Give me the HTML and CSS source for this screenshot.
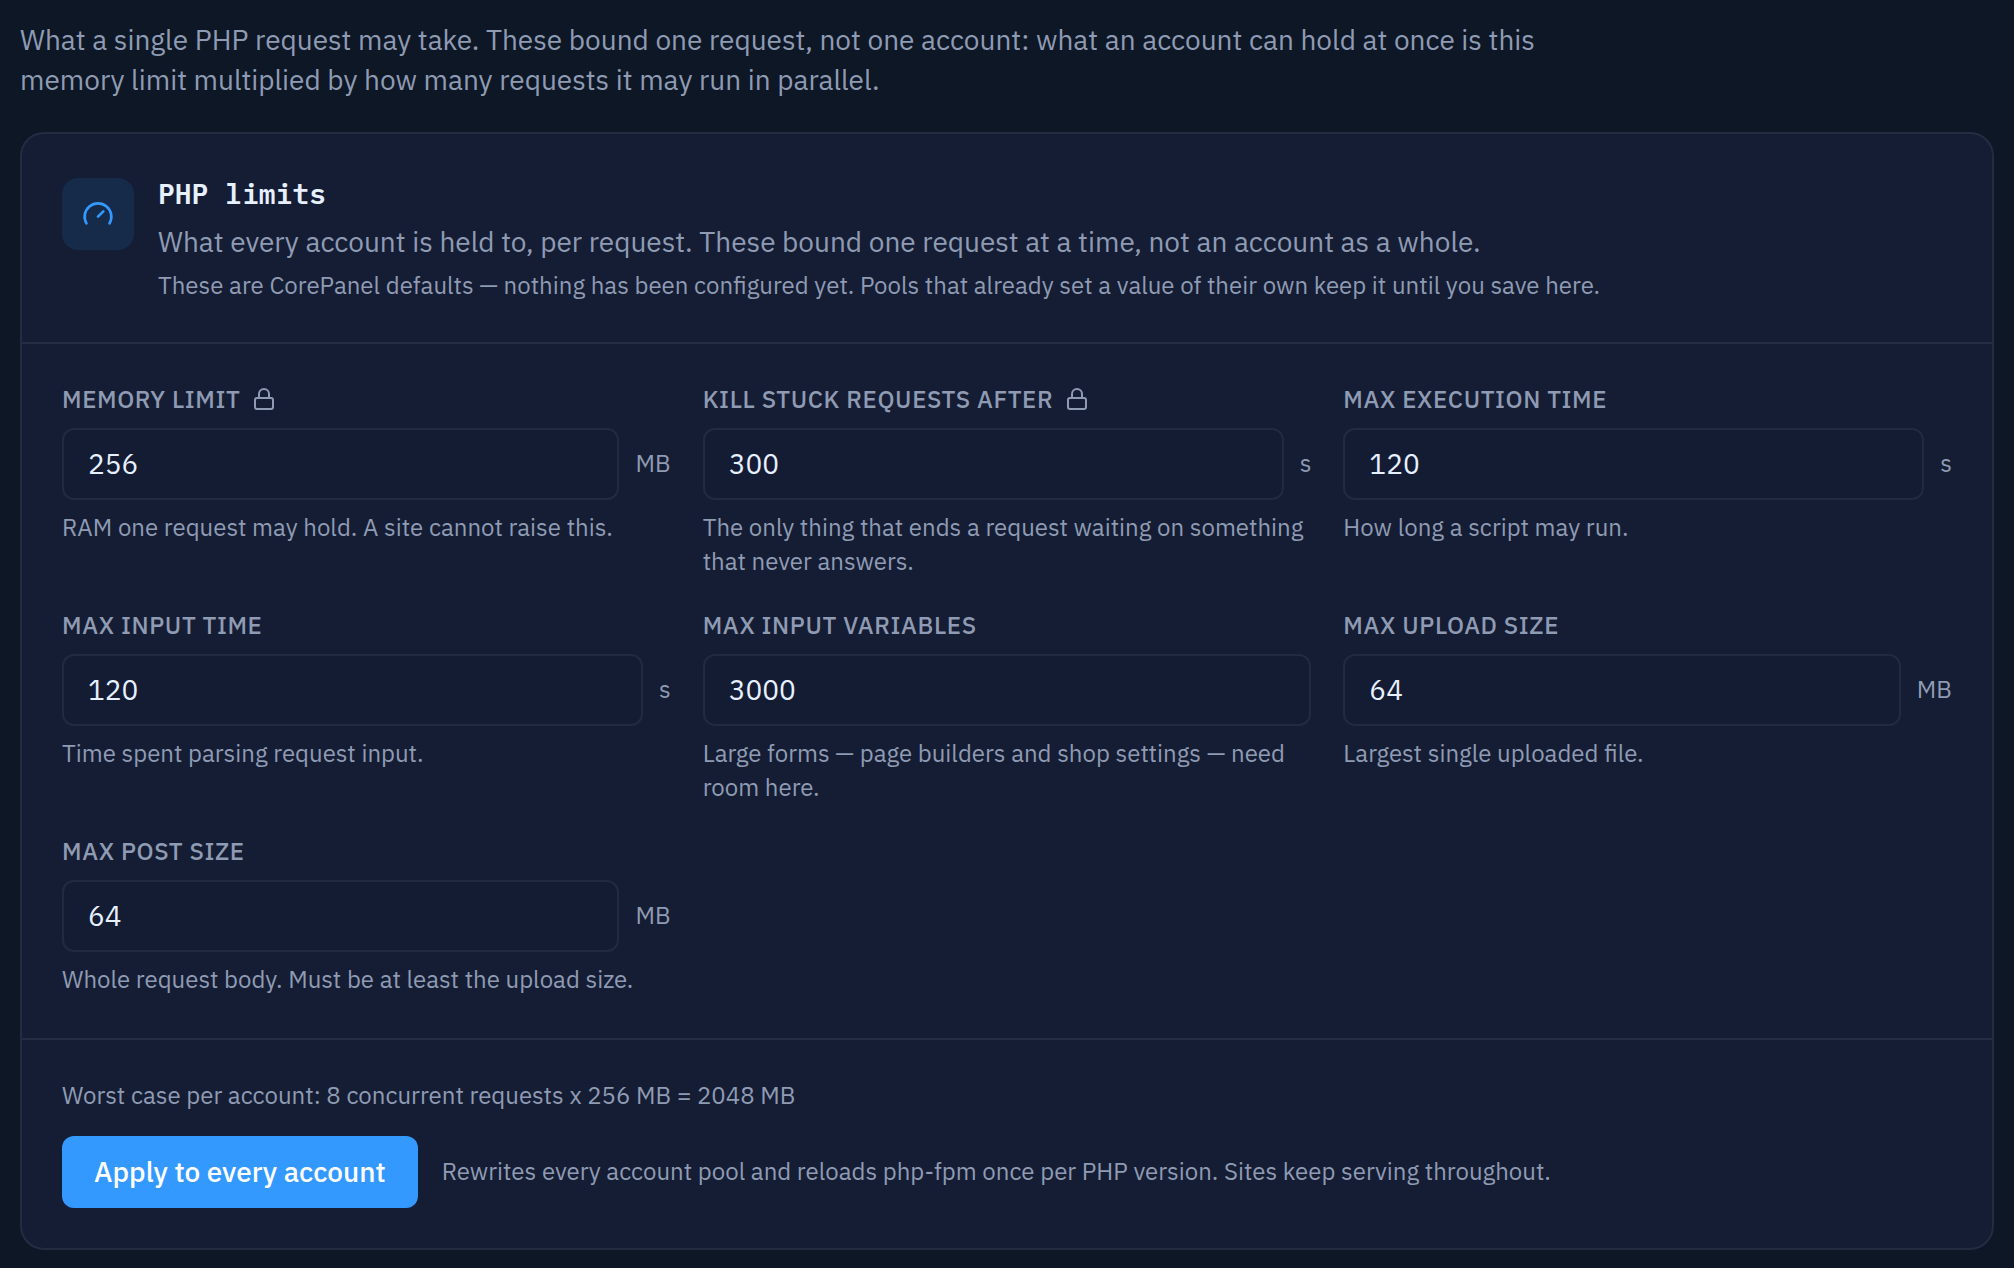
FILE: index.html
```html
<!DOCTYPE html>
<html lang="en">
<head>
  <meta charset="UTF-8">
  <meta name="viewport" content="width=device-width, initial-scale=1.0">
  <title>PHP limits</title>
  <link rel="stylesheet" href="styles.css">
</head>
<body>
  <p class="intro">What a single PHP request may take. These bound one request, not one account: what an account can hold at once is this memory limit multiplied by how many requests it may run in parallel.</p>

  <form class="card">
    <header class="card-header">
      <div class="card-icon">
        <svg viewBox="0 0 24 24" aria-hidden="true">
          <path d="m12 14 4-4"/>
          <path d="M3.34 19a10 10 0 1 1 17.32 0"/>
        </svg>
      </div>
      <div class="card-heading">
        <h1>PHP limits</h1>
        <p class="description">What every account is held to, per request. These bound one request at a time, not an account as a whole.</p>
        <p class="note">These are CorePanel defaults — nothing has been configured yet. Pools that already set a value of their own keep it until you save here.</p>
      </div>
    </header>

    <div class="fields">
      <div class="field">
        <label for="memory">Memory limit
          <svg class="lock" viewBox="0 0 24 24" aria-hidden="true">
            <rect x="3" y="11" width="18" height="11" rx="2"/>
            <path d="M7 11V7a5 5 0 0 1 10 0v4"/>
          </svg>
        </label>
        <div class="control">
          <input type="text" inputmode="numeric" id="memory" value="256">
          <span class="unit">MB</span>
        </div>
        <p class="hint">RAM one request may hold. A site cannot raise this.</p>
      </div>

      <div class="field">
        <label for="kill">Kill stuck requests after
          <svg class="lock" viewBox="0 0 24 24" aria-hidden="true">
            <rect x="3" y="11" width="18" height="11" rx="2"/>
            <path d="M7 11V7a5 5 0 0 1 10 0v4"/>
          </svg>
        </label>
        <div class="control">
          <input type="text" inputmode="numeric" id="kill" value="300">
          <span class="unit">s</span>
        </div>
        <p class="hint">The only thing that ends a request waiting on something that never answers.</p>
      </div>

      <div class="field">
        <label for="execution">Max execution time</label>
        <div class="control">
          <input type="text" inputmode="numeric" id="execution" value="120">
          <span class="unit">s</span>
        </div>
        <p class="hint">How long a script may run.</p>
      </div>

      <div class="field">
        <label for="inputTime">Max input time</label>
        <div class="control">
          <input type="text" inputmode="numeric" id="inputTime" value="120">
          <span class="unit">s</span>
        </div>
        <p class="hint">Time spent parsing request input.</p>
      </div>

      <div class="field">
        <label for="inputVars">Max input variables</label>
        <div class="control">
          <input type="text" inputmode="numeric" id="inputVars" value="3000">
        </div>
        <p class="hint">Large forms — page builders and shop settings — need room here.</p>
      </div>

      <div class="field">
        <label for="upload">Max upload size</label>
        <div class="control">
          <input type="text" inputmode="numeric" id="upload" value="64">
          <span class="unit">MB</span>
        </div>
        <p class="hint">Largest single uploaded file.</p>
      </div>

      <div class="field">
        <label for="post">Max post size</label>
        <div class="control">
          <input type="text" inputmode="numeric" id="post" value="64">
          <span class="unit">MB</span>
        </div>
        <p class="hint">Whole request body. Must be at least the upload size.</p>
      </div>
    </div>

    <footer class="card-footer">
      <p class="note">Worst case per account: 8 concurrent requests x 256 MB = 2048 MB</p>
      <div class="actions">
        <button type="button" class="apply-btn">Apply to every account</button>
        <p class="note">Rewrites every account pool and reloads php-fpm once per PHP version. Sites keep serving throughout.</p>
      </div>
    </footer>
  </form>
</body>
</html>
```
FILE: styles.css
```css
* {
  margin: 0;
  padding: 0;
  box-sizing: border-box;
}

body {
  padding: 20px 20px 18px;
  background: #0d1726;
  color: #8f9bb3;
  font-family: "IBM Plex Sans", Roboto, sans-serif;
  font-size: 28px;
  line-height: 40px;
}

svg {
  fill: none;
  stroke: currentColor;
  stroke-width: 2;
  stroke-linecap: round;
  stroke-linejoin: round;
}

.intro {
  max-width: 1536px;
  margin-bottom: 32px;
}

.card {
  border: 2px solid #222d42;
  border-radius: 24px;
  background: #151d34;
}

.card-header {
  display: flex;
  align-items: flex-start;
  gap: 24px;
  padding: 40px;
  border-bottom: 2px solid #222d42;
}

.card-icon {
  display: flex;
  flex-shrink: 0;
  align-items: center;
  justify-content: center;
  width: 72px;
  height: 72px;
  margin-top: 4px;
  border-radius: 16px;
  background: #162b49;
  color: #3399ff;
}

.card-icon svg {
  width: 32px;
  height: 32px;
}

h1 {
  margin-bottom: 8px;
  color: #e6f0ff;
  font-family: "IBM Plex Mono", "Liberation Mono", monospace;
  font-size: 28px;
  font-weight: 600;
}

.description {
  margin-bottom: 6px;
}

.note {
  font-size: 24px;
  line-height: 34px;
}

.fields {
  display: grid;
  grid-template-columns: repeat(3, 1fr);
  gap: 30px 32px;
  padding: 38px 40px 42px;
}

label {
  display: flex;
  align-items: center;
  gap: 12px;
  margin-bottom: 12px;
  font-size: 24px;
  font-weight: 500;
  line-height: 34px;
  letter-spacing: 0.025em;
  text-transform: uppercase;
}

.lock {
  width: 24px;
  height: 24px;
}

.control {
  display: flex;
  align-items: center;
  gap: 16px;
}

input {
  flex: 1;
  min-width: 0;
  height: 72px;
  padding: 0 24px 2px;
  border: 2px solid #202b40;
  border-radius: 12px;
  outline: none;
  background: #141c33;
  color: #e6f0ff;
  font: inherit;
}

input:focus {
  border-color: #3399ff;
}

.unit {
  padding-bottom: 2px;
  font-size: 24px;
}

.hint {
  margin-top: 10px;
  font-size: 24px;
  line-height: 34px;
}

.card-footer {
  display: flex;
  flex-direction: column;
  gap: 24px;
  padding: 38px 40px 40px;
  border-top: 2px solid #222d42;
}

.actions {
  display: flex;
  align-items: center;
  gap: 24px;
}

.actions .note {
  padding-bottom: 2px;
}

.apply-btn {
  height: 72px;
  padding: 0 32px;
  border: none;
  border-radius: 12px;
  background: #3399ff;
  color: #ffffff;
  font: inherit;
  font-weight: 500;
  cursor: pointer;
}

.apply-btn:hover {
  background: #4da6ff;
}

@media (max-width: 1200px) {
  .fields {
    grid-template-columns: 1fr;
  }

  .actions {
    flex-wrap: wrap;
  }
}
```
